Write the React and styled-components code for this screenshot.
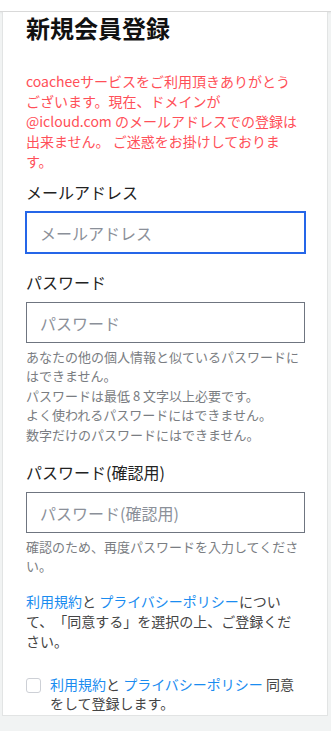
import React from "react";
import styled, { createGlobalStyle } from "styled-components";

const GlobalStyle = createGlobalStyle`
  body {
    margin: 0;
    background: #f1f3f3;
    font-family: "Noto Sans CJK JP", "Noto Sans", sans-serif;
    color: #222;
    text-spacing-trim: space-all;
  }
  * { box-sizing: border-box; }
`;

const TopBar = styled.div`
  height: 12px;
  background: #fff;
  border-bottom: 1px solid #d9d9d9;
  box-shadow: 0 1px 2px rgba(0, 0, 0, 0.06);
`;

const Card = styled.div`
  margin-left: 2px;
  width: 326px;
  background: #fff;
  border: 1px solid #e2e4e4;
  border-top: none;
  padding: 0 22px 1px 23px;
`;

const Title = styled.h1`
  margin: 0;
  font-size: 24px;
  line-height: 32px;
  font-weight: 700;
  color: #111;
`;

const Notice = styled.p`
  margin: 27px 0 0;
  max-width: 272px;
  font-size: 14px;
  line-height: 20px;
  color: #ff4f58;
`;

const Field = styled.div`
  display: flex;
  flex-direction: column;
  margin-top: ${(p) => p.$gap}px;
`;

const Label = styled.label`
  font-size: 16px;
  line-height: 24px;
  color: #222;
  margin-bottom: 8px;
`;

const Input = styled.input`
  width: 100%;
  height: 41px;
  border: 1px solid ${(p) => (p.$active ? "#2566e8" : "#6f7580")};
  box-shadow: ${(p) => (p.$active ? "0 0 0 1px #2566e8" : "none")};
  border-radius: 0;
  padding: 0 13px;
  font-family: inherit;
  font-size: 16px;
  color: #222;
  outline: none;
  &::placeholder {
    color: #8b9099;
  }
`;

const Help = styled.p`
  margin: 4px 0 0;
  font-size: 13px;
  line-height: 19.4px;
  color: #7a7d82;
`;

const Terms = styled.p`
  margin: 15px 0 0;
  font-size: 14px;
  line-height: 20px;
  color: #444;
`;

const Link = styled.a`
  color: #1a8cf0;
  text-decoration: none;
`;

const AgreeRow = styled.label`
  display: flex;
  align-items: flex-start;
  gap: 9px;
  margin-top: 24px;
  font-size: 14px;
  line-height: 19.4px;
  color: #444;
`;

const Check = styled.input`
  appearance: none;
  flex: none;
  width: 15px;
  height: 15px;
  margin: 3px 0 0;
  border: 1px solid #cdd0d6;
  border-radius: 3px;
  background: #fff;
`;

export default function App() {
  return (
    <>
      <GlobalStyle />
      <TopBar />
      <Card>
        <Title>新規会員登録</Title>
        <Notice>
          coacheeサービスをご利用頂きありがとうございます。現在、ドメインが @icloud.com
          のメールアドレスでの登録は出来ません。 ご迷惑をお掛けしております。
        </Notice>

        <Field $gap={9}>
          <Label>メールアドレス</Label>
          <Input $active type="email" placeholder="メールアドレス" />
        </Field>

        <Field $gap={17}>
          <Label>パスワード</Label>
          <Input type="password" placeholder="パスワード" />
          <Help>
            あなたの他の個人情報と似ているパスワードにはできません。
            <br />
            パスワードは最低 8 文字以上必要です。
            <br />
            よく使われるパスワードにはできません。
            <br />
            数字だけのパスワードにはできません。
          </Help>
        </Field>

        <Field $gap={16}>
          <Label>パスワード(確認用)</Label>
          <Input type="password" placeholder="パスワード(確認用)" />
          <Help>確認のため、再度パスワードを入力してください。</Help>
        </Field>

        <Terms>
          <Link href="#">利用規約</Link>と <Link href="#">プライバシーポリシー</Link>
          について、「同意する」を選択の上、ご登録ください。
        </Terms>

        <AgreeRow>
          <Check type="checkbox" />
          <span>
            <Link href="#">利用規約</Link>と <Link href="#">プライバシーポリシー</Link>{" "}
            同意をして登録します。
          </span>
        </AgreeRow>
      </Card>
    </>
  );
}
